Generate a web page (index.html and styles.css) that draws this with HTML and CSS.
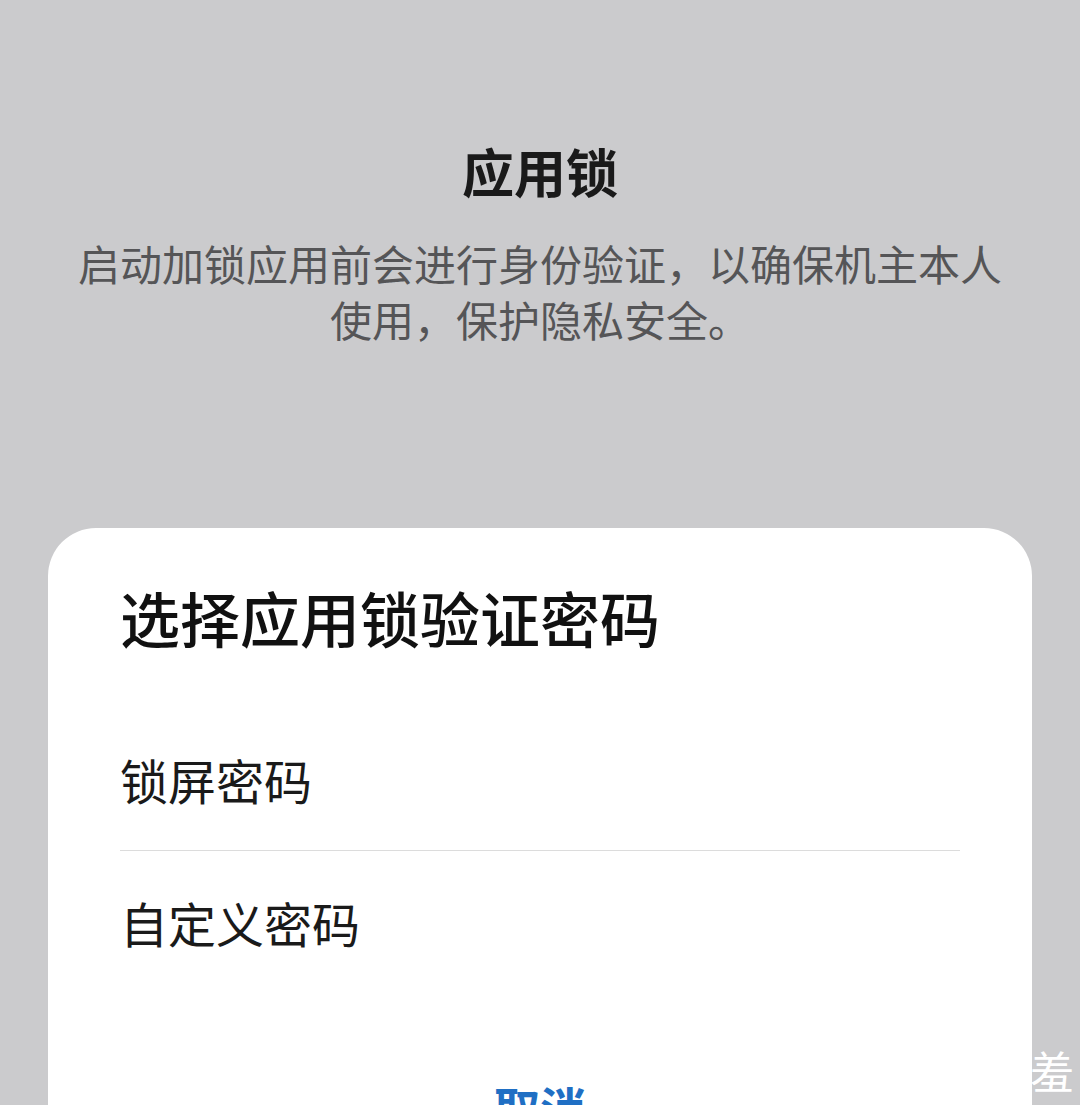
FILE: index.html
```html
<!DOCTYPE html>
<html lang="zh-CN">
<head>
<meta charset="utf-8">
<link rel="stylesheet" href="styles.css">
</head>
<body>
<div class="screen">
  <header class="intro">
    <h1 class="intro-title">应用锁</h1>
    <p class="intro-desc">启动加锁应用前会进行身份验证，以确保机主本人<br>使用，保护隐私安全。</p>
  </header>
  <section class="sheet">
    <h2 class="sheet-title">选择应用锁验证密码</h2>
    <div class="option">锁屏密码</div>
    <div class="divider"></div>
    <div class="option">自定义密码</div>
    <div class="cancel">取消</div>
  </section>
  <span class="watermark">羞</span>
</div>
</body>
</html>
```
FILE: styles.css
```css
html, body {
  margin: 0;
  padding: 0;
  background: #cbcbcd;
}
body {
  font-family: "Noto Sans CJK SC", "Noto Sans", sans-serif;
  width: 1080px;
  height: 1105px;
  overflow: hidden;
}
.screen {
  position: relative;
  width: 1080px;
  height: 1105px;
  display: flex;
  flex-direction: column;
  align-items: center;
}
.intro {
  padding-top: 134px;
  text-align: center;
  display: flex;
  flex-direction: column;
  align-items: center;
}
.intro-title {
  margin: 0;
  font-size: 52px;
  line-height: 73px;
  font-weight: 700;
  color: #1a1a1a;
}
.intro-desc {
  margin: 28px 0 0;
  font-size: 42px;
  line-height: 56px;
  color: #555557;
  font-weight: 400;
}
.sheet {
  margin-top: 181px;
  width: 984px;
  flex: 1;
  background: #ffffff;
  border-radius: 48px 48px 0 0;
  padding: 48px 72px 0;
  box-sizing: border-box;
  display: flex;
  flex-direction: column;
}
.sheet-title {
  margin: 0 0 50px;
  font-size: 60px;
  line-height: 82px;
  font-weight: 500;
  color: #111111;
}
.option {
  height: 142px;
  display: flex;
  align-items: center;
  font-size: 48px;
  color: #1a1a1a;
}
.divider {
  height: 1px;
  background: #dcdcdc;
}
.cancel {
  margin-top: 81px;
  font-size: 46px;
  line-height: 64px;
  font-weight: 700;
  color: #1f6fc4;
  text-align: center;
}
.watermark {
  position: absolute;
  left: 1030px;
  top: 1040px;
  font-size: 44px;
  line-height: 60px;
  color: #ffffff;
}
```
